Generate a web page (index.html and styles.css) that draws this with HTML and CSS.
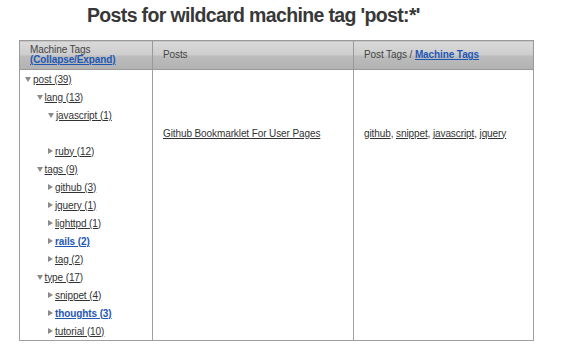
FILE: index.html
```html
<!DOCTYPE html>
<html>
<head>
<meta charset="utf-8">
<link rel="stylesheet" href="styles.css">
</head>
<body>
<h1 class="title">Posts for wildcard machine tag 'post:*'</h1>
<table class="grid">
  <thead>
    <tr>
      <th class="col-tree">Machine Tags<br><a class="blue" href="#">(Collapse/Expand)</a></th>
      <th class="col-posts">Posts</th>
      <th class="col-tags">Post Tags / <a class="blue" href="#">Machine Tags</a></th>
    </tr>
  </thead>
  <tbody>
    <tr>
      <td class="tree-cell">
        <ul class="tree">
          <li><div class="row"><span class="tri down"></span><a href="#">post (39)</a></div>
            <ul>
              <li><div class="row"><span class="tri down"></span><a href="#">lang (13)</a></div>
                <ul>
                  <li><div class="row"><span class="tri down"></span><a href="#">javascript (1)</a></div>
                    <div class="row empty"></div>
                  </li>
                  <li><div class="row"><span class="tri right"></span><a href="#">ruby (12)</a></div></li>
                </ul>
              </li>
              <li><div class="row"><span class="tri down"></span><a href="#">tags (9)</a></div>
                <ul>
                  <li><div class="row"><span class="tri right"></span><a href="#">github (3)</a></div></li>
                  <li><div class="row"><span class="tri right"></span><a href="#">jquery (1)</a></div></li>
                  <li><div class="row"><span class="tri right"></span><a href="#">lighttpd (1)</a></div></li>
                  <li><div class="row"><span class="tri right"></span><a class="blue" href="#">rails (2)</a></div></li>
                  <li><div class="row"><span class="tri right"></span><a href="#">tag (2)</a></div></li>
                </ul>
              </li>
              <li><div class="row"><span class="tri down"></span><a href="#">type (17)</a></div>
                <ul>
                  <li><div class="row"><span class="tri right"></span><a href="#">snippet (4)</a></div></li>
                  <li><div class="row"><span class="tri right"></span><a class="blue" href="#">thoughts (3)</a></div></li>
                  <li><div class="row"><span class="tri right"></span><a href="#">tutorial (10)</a></div></li>
                </ul>
              </li>
            </ul>
          </li>
        </ul>
      </td>
      <td class="post-cell"><div class="row"><a href="#">Github Bookmarklet For User Pages</a></div></td>
      <td class="post-cell"><div class="row"><span><a href="#">github</a>, <a href="#">snippet</a>, <a href="#">javascript</a>, <a href="#">jquery</a></span></div></td>
    </tr>
  </tbody>
</table>
</body>
</html>
```
FILE: styles.css
```css
html, body {
  margin: 0;
  padding: 0;
  background: #fff;
}
body {
  font-family: "Liberation Sans", Arial, Helvetica, sans-serif;
  color: #333;
}
.title {
  margin: 0;
  padding: 4px 0 0 87px;
  height: 40px;
  box-sizing: border-box;
  font-size: 19.5px;
  line-height: 23px;
  font-weight: bold;
  color: #383838;
  letter-spacing: -0.65px;
}
.grid {
  margin-left: 19px;
  border-collapse: collapse;
  border: 1px solid #a0a0a0;
  font-size: 10px;
  letter-spacing: -0.1px;
}
.grid th {
  height: 28px;
  padding: 0 10px;
  text-align: left;
  vertical-align: middle;
  font-weight: normal;
  line-height: 10px;
  color: #444;
  border: 1px solid #999;
  background: linear-gradient(#dadada, #cdcdcd 48%, #bcbcbc 52%, #b2b2b2);
}
.col-tree { width: 112px; }
.col-posts { width: 180px; }
.col-tags { width: 159px; }
.grid td {
  border: 1px solid #a0a0a0;
  vertical-align: top;
  padding: 0;
}
.tree-cell { padding-left: 5px !important; }
.post-cell { padding: 54px 10px 0 10px !important; }
.tree, .tree ul {
  list-style: none;
  margin: 0;
  padding: 0;
}
.tree ul { padding-left: 11.5px; }
.row {
  height: 18px;
  display: flex;
  align-items: center;
  white-space: nowrap;
}
.tri {
  display: inline-block;
  width: 0;
  height: 0;
  margin-right: 2px;
}
.tri.down {
  border-left: 3px solid transparent;
  border-right: 3px solid transparent;
  border-top: 5px solid #8a8a8a;
}
.tri.right {
  border-top: 3px solid transparent;
  border-bottom: 3px solid transparent;
  border-left: 5px solid #8a8a8a;
  margin-right: 2px;
}
a {
  color: #333;
  text-decoration: underline;
}
a.blue {
  color: #1f58b4;
  font-weight: bold;
}
```
